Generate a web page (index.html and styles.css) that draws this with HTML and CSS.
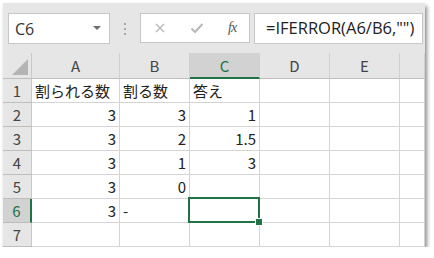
FILE: index.html
```html
<!DOCTYPE html>
<html lang="ja">
<head>
    <meta charset="UTF-8" />
    <title>IFERROR</title>
    <link rel="stylesheet" href="styles.css">
</head>
<body>
    <div class="window">
        <div class="toolbar">
            <div class="name-box">
                <span>C6</span>
                <span class="caret"></span>
            </div>
            <div class="dots"><i></i><i></i><i></i></div>
            <div class="fx-box">
                <svg class="icon" width="12" height="12" viewBox="0 0 12 12">
                    <path d="M2 2 L10 10 M10 2 L2 10" stroke="#b8b8b8" stroke-width="1.4" fill="none"/>
                </svg>
                <svg class="icon" width="14" height="12" viewBox="0 0 14 12">
                    <path d="M1.5 6.5 L5 10 L12.5 2" stroke="#b8b8b8" stroke-width="2" fill="none"/>
                </svg>
                <span class="fx">fx</span>
            </div>
            <div class="formula">=IFERROR(A6/B6,"")</div>
        </div>

        <div class="sheet">
            <div class="corner"><span class="tri"></span></div>
            <div class="col-head">A</div>
            <div class="col-head">B</div>
            <div class="col-head active">C</div>
            <div class="col-head">D</div>
            <div class="col-head">E</div>
            <div class="col-head"></div>

            <div class="row-head">1</div>
            <div class="cell">割られる数</div>
            <div class="cell">割る数</div>
            <div class="cell">答え</div>
            <div class="cell"></div>
            <div class="cell"></div>
            <div class="cell"></div>

            <div class="row-head">2</div>
            <div class="cell num">3</div>
            <div class="cell num">3</div>
            <div class="cell num">1</div>
            <div class="cell"></div>
            <div class="cell"></div>
            <div class="cell"></div>

            <div class="row-head">3</div>
            <div class="cell num">3</div>
            <div class="cell num">2</div>
            <div class="cell num">1.5</div>
            <div class="cell"></div>
            <div class="cell"></div>
            <div class="cell"></div>

            <div class="row-head">4</div>
            <div class="cell num">3</div>
            <div class="cell num">1</div>
            <div class="cell num">3</div>
            <div class="cell"></div>
            <div class="cell"></div>
            <div class="cell"></div>

            <div class="row-head">5</div>
            <div class="cell num">3</div>
            <div class="cell num">0</div>
            <div class="cell"></div>
            <div class="cell"></div>
            <div class="cell"></div>
            <div class="cell"></div>

            <div class="row-head active">6</div>
            <div class="cell num">3</div>
            <div class="cell">-</div>
            <div class="cell selected"><span class="handle"></span></div>
            <div class="cell"></div>
            <div class="cell"></div>
            <div class="cell"></div>

            <div class="row-head">7</div>
            <div class="cell"></div>
            <div class="cell"></div>
            <div class="cell"></div>
            <div class="cell"></div>
            <div class="cell"></div>
            <div class="cell"></div>
        </div>
    </div>
</body>
</html>
```

FILE: styles.css
```css
body {
    margin: 0;
    background: #ffffff;
    font-family: "Noto Sans CJK JP", "Noto Sans", sans-serif;
}
.window {
    margin: 3px 0 0 3px;
    width: 422px;
    height: 244px;
    background: #e6e6e6;
    box-shadow: 2px 3px 4px rgba(0, 0, 0, 0.45);
    overflow: hidden;
}
.toolbar {
    height: 50px;
    display: flex;
    align-items: flex-start;
    padding: 10px 2px 0 5px;
    box-sizing: border-box;
}
.name-box {
    width: 102px;
    height: 31px;
    box-sizing: border-box;
    background: white;
    border: 1px solid #c6c6c6;
    display: flex;
    align-items: center;
    justify-content: space-between;
    padding: 0 8px 0 6px;
    font-family: "Open Sans", sans-serif;
    font-size: 16px;
    color: #333;
}
.caret {
    width: 0;
    height: 0;
    border-left: 4px solid transparent;
    border-right: 4px solid transparent;
    border-top: 4px solid #6e6e6e;
    margin-bottom: 2px;
}
.dots {
    width: 30px;
    height: 31px;
    display: flex;
    flex-direction: column;
    align-items: center;
    justify-content: center;
    gap: 3px;
}
.dots i {
    width: 2px;
    height: 2px;
    background: #a8a8a8;
}
.fx-box {
    width: 110px;
    height: 30px;
    box-sizing: border-box;
    background: white;
    border: 1px solid #c6c6c6;
    display: flex;
    align-items: center;
    padding-left: 13px;
    gap: 24px;
}
.fx {
    font-family: "Liberation Serif", serif;
    font-style: italic;
    font-size: 14px;
    color: #555;
    letter-spacing: -1px;
}
.formula {
    flex: 1;
    margin-left: 4px;
    height: 31px;
    box-sizing: border-box;
    background: white;
    border: 1px solid #c6c6c6;
    padding-left: 11px;
    font-family: "Open Sans", sans-serif;
    font-size: 16.5px;
    line-height: 28px;
    color: #222;
    white-space: nowrap;
}
.sheet {
    display: grid;
    grid-template-columns: 29px 88px 70px 70px 70px 70px 1fr;
    grid-template-rows: 26px repeat(7, 24px);
    background: white;
    font-size: 15px;
    color: #222;
}
.corner, .col-head, .row-head {
    background: #e6e6e6;
    border-right: 1px solid #c9c9c9;
    border-bottom: 1px solid #bdbdbd;
    box-sizing: border-box;
    display: flex;
    align-items: center;
    justify-content: center;
    color: #444;
}
.col-head {
    border-right-color: #d0d0d0;
}
.corner {
    position: relative;
}
.tri {
    position: absolute;
    right: 3px;
    bottom: 3px;
    width: 0;
    height: 0;
    border-left: 16px solid transparent;
    border-bottom: 16px solid #b4b4b4;
}
.col-head.active {
    background: #d2d2d2;
    color: #217346;
    border-bottom: 2px solid #217346;
}
.row-head.active {
    background: #d2d2d2;
    color: #217346;
    border-right: 2px solid #217346;
}
.cell {
    border-right: 1px solid #d4d4d4;
    border-bottom: 1px solid #d4d4d4;
    box-sizing: border-box;
    padding: 0 3px;
    line-height: 23px;
    white-space: nowrap;
}
.num {
    text-align: right;
}
.selected {
    position: relative;
}
.selected::before {
    content: "";
    position: absolute;
    top: -2px;
    left: -2px;
    right: -1px;
    bottom: -1px;
    border: 2px solid #217346;
}
.handle {
    position: absolute;
    right: -4px;
    bottom: -4px;
    width: 6px;
    height: 6px;
    background: #217346;
    border: 1px solid white;
}
```
